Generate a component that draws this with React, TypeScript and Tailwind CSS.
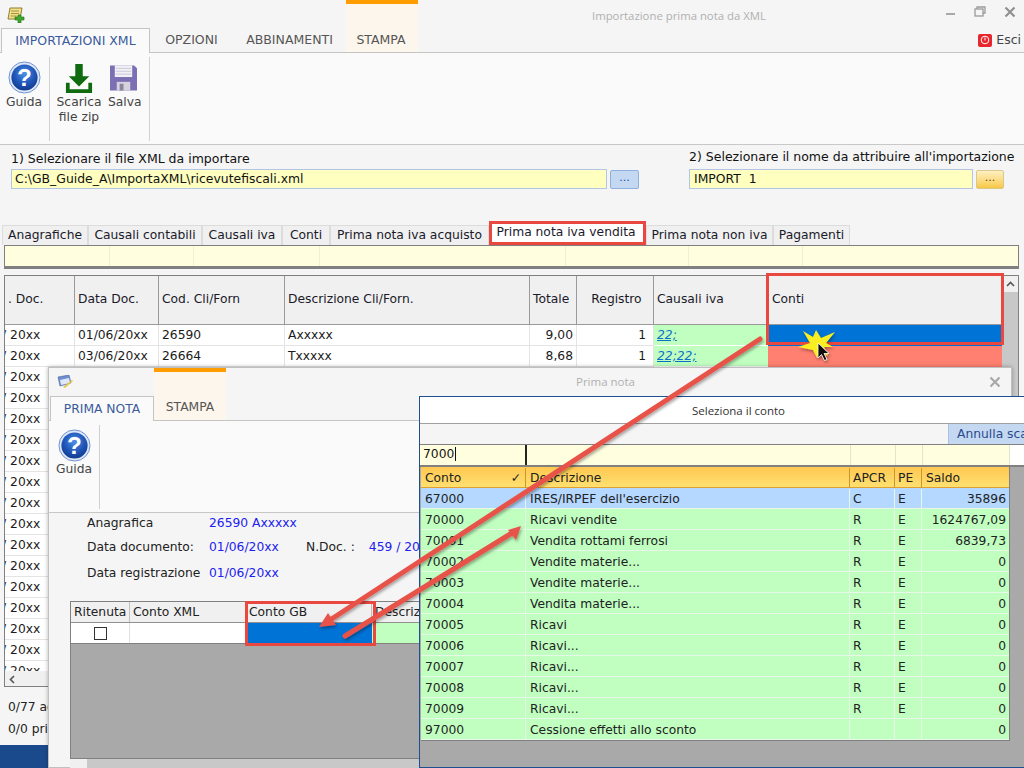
import React from "react";

const FONT = "font-['DejaVu_Sans',Verdana,sans-serif]";

function HelpIcon() {
  return (
    <svg width="33" height="33" viewBox="0 0 34 34">
      <defs>
        <radialGradient id="hg" cx="50%" cy="35%" r="65%">
          <stop offset="0%" stopColor="#4f8fe8" />
          <stop offset="60%" stopColor="#1f56b8" />
          <stop offset="100%" stopColor="#123c8e" />
        </radialGradient>
      </defs>
      <circle cx="17" cy="17" r="16" fill="#dfe8f8" stroke="#6d8fcf" strokeWidth="1" />
      <circle cx="17" cy="17" r="13.5" fill="url(#hg)" />
      <text x="17" y="26" textAnchor="middle" fontSize="25" fontWeight="700" fontFamily="Liberation Sans" fill="#fff">?</text>
    </svg>
  );
}

function DownloadIcon() {
  return (
    <svg width="28" height="30" viewBox="0 0 30 32">
      <path d="M11 0h8v13h7L15 24 4 13h7z" fill="#0f6a10" />
      <path d="M1 20h4v7h20v-7h4v11H1z" fill="#0f6a10" />
    </svg>
  );
}

function SaveIcon() {
  return (
    <svg width="27" height="27" viewBox="0 0 28 27">
      <path d="M0 1h25l3 3v23H0z" fill="#7d6fb4" />
      <rect x="5" y="1" width="18" height="12" fill="#f2f1f6" />
      <path d="M6 4h16M6 7h16M6 10h16" stroke="#c9c6d9" strokeWidth="1" />
      <rect x="7" y="18" width="14" height="9" fill="#d5d3dc" />
      <rect x="10" y="20" width="4" height="7" fill="#8a86a0" />
    </svg>
  );
}

function AppIcon() {
  return (
    <svg width="18" height="16" viewBox="0 0 18 16">
      <path d="M3 1h12l-2 11H1z" fill="#f2e08a" stroke="#8f7f2e" strokeWidth="1" />
      <path d="M4 4h8M4 6.500h8M3.500 9h6" stroke="#8f7f2e" strokeWidth=".8" />
      <path d="M11 8h3v2h3v3h-3v3h-3v-3H8v-3h3z" fill="#3ea82c" stroke="#1f6d14" strokeWidth=".6" />
    </svg>
  );
}

function NoteIcon() {
  return (
    <svg width="17" height="14" viewBox="0 0 17 14">
      <path d="M1 2l11-2 2 8-11 3z" fill="#6f8fd0" stroke="#48629e" strokeWidth=".6" />
      <path d="M3 5l9-2 1 5-9 2z" fill="#dfe7f8" />
      <path d="M6 12l9-7 1 1-8 7z" fill="#e5c84c" />
    </svg>
  );
}

const COLS = "grid grid-cols-[70px_84px_126px_245px_47px_77px_114px_235px]";
const HEAD = "bg-[#f0f0f0] border-r border-[#9a9a9a] text-[#1a1a2a] pl-[3px] pb-[2px] flex items-center h-[48px] text-[12.300px]";

function MainHeader() {
  return (
    <div className={`${COLS} h-[49px] border-b border-[#9a9a9a]`}>
      <div className={`${HEAD} pl-0 whitespace-nowrap overflow-hidden`}>. Doc.</div>
      <div className={HEAD}>Data Doc.</div>
      <div className={HEAD}>Cod. Cli/Forn</div>
      <div className={HEAD}>Descrizione Cli/Forn.</div>
      <div className={HEAD}>Totale</div>
      <div className={`${HEAD} justify-center`}>Registro</div>
      <div className={HEAD}>Causali iva</div>
      <div className={`${HEAD} pl-[4px]`}>Conti</div>
    </div>
  );
}

function MainRow({ d, c, n, t, iva, bg }: { d: string; c: string; n: string; t: string; iva: string; bg: string }) {
  const cell = "bg-white border-r border-b border-[#e4e4e4] h-[21px] flex items-center pl-[3px] text-[12.300px] text-[#1a1a1a] whitespace-nowrap overflow-hidden";
  return (
    <div className={`${COLS} h-[21px]`}>
      <div className={cell}><span className="-ml-[6px]">/ 20xx</span></div>
      <div className={cell}>{d}</div>
      <div className={cell}>{c}</div>
      <div className={cell}>{n}</div>
      <div className={`${cell} justify-end pr-[3px]`}>{t}</div>
      <div className={`${cell} justify-end pr-[7px]`}>1</div>
      <div className="bg-[#c0ffc0] border-b border-white h-[21px] flex items-center pl-[3px] text-[12.300px] text-[#0a6fc9] underline italic">{iva}</div>
      <div className={`${bg} h-[21px]`} />
    </div>
  );
}

const CONTI: [string, string, string, string, string][] = [
  ["67000", "IRES/IRPEF dell'esercizio", "C", "E", "35896"],
  ["70000", "Ricavi vendite", "R", "E", "1624767,09"],
  ["70001", "Vendita rottami ferrosi", "R", "E", "6839,73"],
  ["70002", "Vendite materie...", "R", "E", "0"],
  ["70003", "Vendite materie...", "R", "E", "0"],
  ["70004", "Vendita materie...", "R", "E", "0"],
  ["70005", "Ricavi", "R", "E", "0"],
  ["70006", "Ricavi...", "R", "E", "0"],
  ["70007", "Ricavi...", "R", "E", "0"],
  ["70008", "Ricavi...", "R", "E", "0"],
  ["70009", "Ricavi...", "R", "E", "0"],
  ["97000", "Cessione effetti allo sconto", "", "", "0"],
];

const SEL_COLS = "grid grid-cols-[105px_324px_45px_27px_87px]";

function Tabs2() {
  const tabs: [string, string][] = [
    ["Anagrafiche", "w-[86px]"],
    ["Causali contabili", "w-[114px]"],
    ["Causali iva", "w-[80px]"],
    ["Conti", "w-[48px]"],
    ["Prima nota iva acquisto", "w-[159px]"],
  ];
  const after: [string, string][] = [
    ["Prima nota non iva", "w-[127px]"],
    ["Pagamenti", "w-[77px]"],
  ];
  const c = "h-[20px] bg-[#f0f0f0] border border-b-0 border-[#dcdcdc] flex items-center justify-center text-[12.300px] text-[#1a1a2a] whitespace-nowrap";
  return (
    <div className="flex items-end h-[24px] pl-[2px]">
      {tabs.map(([t, w]) => (
        <div key={t} className={`${w} ${c}`}>{t}</div>
      ))}
      <div className="w-[157px] h-[24px] bg-white border-[3px] border-[#e8483f] flex items-center justify-center text-[12.300px] text-[#1a1a2a] whitespace-nowrap pr-[3px] pb-[2px]">
        Prima nota iva vendita
      </div>
      {after.map(([t, w]) => (
        <div key={t} className={`${w} ${c}`}>{t}</div>
      ))}
    </div>
  );
}

export default function App() {
  const rows = Array.from({ length: 14 });
  return (
    <div className={`relative w-[1024px] h-[768px] overflow-hidden bg-[#f5f5f5] ${FONT}`}>
      <div className="absolute left-[346px] top-0 w-[72px] h-[52px] bg-[#fdf6ec] border-t-[4px] border-[#ff9c00]" />
      {/* Main window */}
      <div className="relative flex items-start h-[28px]">
        <div className="pl-[7px] pt-[7px]"><AppIcon /></div>
        <div className="ml-[567px] pt-[7px] text-[11.350px] text-[#b0b0b0] font-['Open_Sans',sans-serif]">Importazione prima nota da XML</div>
        <div className="ml-auto flex items-center gap-[18px] pt-[6px] pr-[8px] text-[#9a9a9a]">
          <svg width="10" height="10" viewBox="0 0 10 10"><path d="M0 7h9" stroke="#a8a8a8" strokeWidth="2" /></svg>
          <svg width="12" height="12" viewBox="0 0 12 12" fill="none" stroke="#9a9a9a" strokeWidth="1.300"><path d="M3 3V1h8v6H9" /><rect x="1" y="3" width="8" height="7" /></svg>
          <svg width="12" height="12" viewBox="0 0 12 12"><path d="M1.500 1.500l9 9M10.500 1.500l-9 9" stroke="#909090" strokeWidth="2.200" /></svg>
        </div>
      </div>
      <div className="relative h-[25px] border-b border-[#c4c4c4] flex items-end pl-[1px]">
        <div className="w-[149px] h-[25px] -mb-px bg-[#fafafa] border border-b-0 border-[#c4c4c4] flex items-center justify-center text-[#3a5a9c] text-[12.500px]">IMPORTAZIONI XML</div>
        <div className="w-[83px] h-[24px] flex items-center justify-center text-[#555] text-[12.500px]">OPZIONI</div>
        <div className="w-[113px] h-[24px] flex items-center justify-center text-[#555] text-[12.500px]">ABBINAMENTI</div>
        <div className="w-[72px] h-[24px] flex items-center justify-center text-[#555] text-[12.500px] ml-[-1px]">STAMPA</div>
        <div className="ml-auto h-[24px] flex items-center gap-[4px] pr-[3px] text-[12.500px] text-[#444]">
          <span className="w-[14px] h-[13px] rounded-[2px] bg-[#e8262c] flex items-center justify-center">
            <svg width="10" height="10" viewBox="0 0 10 10" fill="none" stroke="#fff" strokeWidth="1"><circle cx="5" cy="5" r="3.800" /><path d="M5 2.500v3" /></svg>
          </span>
          Esci
        </div>
      </div>
      <div className="h-[92px] bg-[#fafafa] border-b border-[#c8c8c8] flex pt-[4px] text-[12.300px] text-[#444]">
        <div className="w-[50px] h-[84px] border-r border-[#d0d0d0] flex flex-col items-center pt-[4px] pr-[1px]">
          <HelpIcon />
          <span className="leading-[15px] mt-[1px]">Guida</span>
        </div>
        <div className="flex flex-col items-center w-[58px] text-center pt-[7px]">
          <DownloadIcon />
          <span className="leading-[15px] mt-[1px]">Scarica<br />file zip</span>
        </div>
        <div className="flex flex-col items-start w-[42px] h-[84px] border-r border-[#d0d0d0] pt-[7px]">
          <span className="block ml-[2px] h-[27px]"><SaveIcon /></span>
          <span className="leading-[15px] mt-[4px]">Salva</span>
        </div>
      </div>
      <div className="flex h-[76px] pt-[3px]">
        <div className="pl-[11px] w-[689px]">
          <div className="text-[12.500px] text-[#111] leading-[18px] mt-[2px]">1) Selezionare il file XML da importare</div>
          <div className="flex items-center mt-[1px]">
            <div className="w-[596px] h-[20px] bg-[#ffffc0] border border-[#b4c4e4] flex items-center pl-[3px] text-[12.400px] text-[#111]">C:\GB_Guide_A\ImportaXML\ricevutefiscali.xml</div>
            <div className="ml-[3px] w-[29px] h-[19px] rounded-[2px] bg-[#c4d8f2] border border-[#8cb0e0] flex items-center justify-center text-[11px] text-[#1a4fb0] leading-none pb-[3px]">...</div>
          </div>
        </div>
        <div>
          <div className="text-[12.500px] text-[#111] leading-[18px]">2) Selezionare il nome da attribuire all'importazione</div>
          <div className="flex items-center mt-[3px]">
            <div className="w-[284px] h-[20px] bg-[#ffffc0] border border-[#b4c4e4] flex items-center pl-[4px] text-[12.400px] text-[#111] whitespace-pre">IMPORT  1</div>
            <div className="ml-[3px] w-[28px] h-[19px] rounded-[2px] bg-linear-to-b from-[#fff0c0] to-[#f8c840] border border-[#d8c88c] flex items-center justify-center text-[11px] text-[#6a4a00] leading-none pb-[3px]">...</div>
          </div>
        </div>
      </div>
      <Tabs2 />
      <div className="ml-[4px] w-[1015px] h-[24px] bg-[#ffffdf] border border-[#808080] border-b-[3px] flex">
        <div className="w-[105px] border-r border-[#f0f0d4]" />
        <div className="w-[84px] border-r border-[#f0f0d4]" />
        <div className="w-[126px] border-r border-[#f0f0d4]" />
        <div className="w-[246px] border-r border-[#f0f0d4]" />
        <div className="w-[123px] border-r border-[#f0f0d4]" />
        <div className="w-[114px] border-r border-[#f0f0d4]" />
      </div>
      {/* Main grid */}
      <div className="ml-[4px] mt-[6px] w-[1015px] h-[412px] border border-[#808080] bg-white flex overflow-hidden">
        <div className="flex-1 min-w-0 flex flex-col">
          <MainHeader />
          <MainRow d="01/06/20xx" c="26590" n="Axxxxx" t="9,00" iva="22;" bg="bg-[#0073d6]" />
          <MainRow d="03/06/20xx" c="26664" n="Txxxxx" t="8,68" iva="22;22;" bg="bg-[#ff8070]" />
          {rows.map((_, i) => (
            <div key={i} className="h-[21px] shrink-0 border-b border-[#e4e4e4] overflow-hidden text-[12.300px] text-[#1a1a1a] leading-[20px]"><span className="-ml-[3px]">/ 20xx</span></div>
          ))}
          <div className="h-[10px] shrink-0 overflow-hidden text-[12.300px] text-[#1a1a1a] leading-[20px]"><span className="-ml-[3px]">/ 20xx</span></div>
          <div className="h-[16px] shrink-0 bg-[#f0f0f0] flex items-center pl-[4px]">
            <svg width="6" height="9" viewBox="0 0 6 9" fill="none" stroke="#555" strokeWidth="1.600"><path d="M5 1L1.500 4.500 5 8" /></svg>
          </div>
        </div>
        <div className="w-[16px] bg-[#c8c8c8] flex justify-center">
          <div className="w-[16px] h-[16px] bg-[#f0f0f0] flex items-center justify-center">
            <svg width="9" height="6" viewBox="0 0 9 6" fill="none" stroke="#555" strokeWidth="1.600"><path d="M1 5l3.500-3.500L8 5" /></svg>
          </div>
        </div>
      </div>
      <div className="pl-[8px] pt-[9px] text-[12.300px] text-[#222] leading-[22px]">
        <div>0/77 acquisti</div>
        <div>0/0 prima nota</div>
      </div>
      <div className="absolute left-0 top-[745px] w-[48px] h-[23px] bg-[#1a4a8c]" />

      {/* Prima nota window */}
      <div className="absolute left-[48px] top-[367px] w-[964px] h-[401px] bg-[#f5f5f5] border border-[#c0c0c0] shadow-[0_0_4px_rgba(0,0,0,0.3)]">
        <div className="absolute left-[105px] top-0 w-[72px] h-[52px] bg-[#fdf6ec] border-t-[4px] border-[#ff9c00]" />
        <div className="relative flex h-[28px] items-center">
          <div className="pl-[8px]"><NoteIcon /></div>
          <div className="ml-[502px] text-[11.500px] text-[#b0b0b0] font-['Open_Sans',sans-serif]">Prima nota</div>
          <svg className="ml-auto mr-[10px]" width="12" height="12" viewBox="0 0 12 12"><path d="M1.500 1.500l9 9M10.500 1.500l-9 9" stroke="#a8a8a8" strokeWidth="2.200" /></svg>
        </div>
        <div className="relative h-[25px] border-b border-[#c4c4c4] flex items-end pl-[1px]">
          <div className="w-[104px] h-[25px] -mb-px bg-[#fafafa] border border-b-0 border-[#c4c4c4] flex items-center justify-center text-[#3a5a9c] text-[12.300px]">PRIMA NOTA</div>
          <div className="w-[72px] h-[25px] flex items-center justify-center text-[#555] text-[12.300px]">STAMPA</div>
        </div>
        <div className="relative h-[92px] bg-[#fafafa] border-b border-[#c8c8c8] flex pt-[4px]">
          <div className="w-[51px] h-[84px] border-r border-[#d0d0d0] flex flex-col items-center text-[12.300px] text-[#444] pt-[4px]">
            <HelpIcon />
            <span className="leading-[15px]">Guida</span>
          </div>
        </div>
        <div className="pl-[38px] text-[12.300px] text-[#222]">
          <div className="flex mt-[2px] h-[17px] items-center">
            <span className="w-[122px]">Anagrafica</span><span className="text-[#2020f0]">26590 Axxxxx</span>
          </div>
          <div className="flex mt-[7px] h-[17px] items-center">
            <span className="w-[122px]">Data documento:</span><span className="text-[#2020f0] w-[97px]">01/06/20xx</span>
            <span>N.Doc. :</span><span className="text-[#2020f0] ml-[14px] whitespace-nowrap">459 / 20xx</span>
          </div>
          <div className="flex mt-[9px] h-[17px] items-center">
            <span className="w-[122px] whitespace-nowrap">Data registrazione</span><span className="text-[#2020f0]">01/06/20xx</span>
          </div>
        </div>
        <div className="ml-[21px] mt-[19px] w-[900px] h-[158px] border border-[#808080] bg-[#a9a9a9]">
          <div className="grid grid-cols-[59px_116px_126px_1fr] h-[21px] border-b border-[#909090] bg-[#f0f0f0] text-[12.300px] text-[#222]">
            <div className="border-r border-[#c0c0c0] pl-[3px] leading-[20px]">Ritenuta</div>
            <div className="border-r border-[#c0c0c0] pl-[3px] leading-[20px]">Conto XML</div>
            <div className="border-r border-[#c0c0c0] pl-[3px] leading-[20px]">Conto GB</div>
            <div className="pl-[3px] leading-[20px]">Descrizione</div>
          </div>
          <div className="grid grid-cols-[59px_116px_126px_1fr] h-[21px] border-b border-[#808080] bg-white">
            <div className="border-r border-[#e0e0e0] flex items-center justify-center"><span className="w-[13px] h-[13px] border border-[#333] bg-white" /></div>
            <div className="border-r border-[#e0e0e0]" />
            <div className="bg-[#0073d6]" />
            <div className="bg-[#c0ffc0]" />
          </div>
        </div>
        <div className="ml-[21px] w-[900px] h-[10px] bg-[#c8c8c8] flex">
          <div className="w-[17px] h-[10px] bg-[#f0f0f0]" />
        </div>
      </div>

      {/* Seleziona il conto window */}
      <div className="absolute left-[419px] top-[396px] w-[636px] h-[372px] bg-[#a9a9a9] border border-[#1f4f8f]">
        <div className="h-[27px] bg-white border-b border-[#a0a0a0] flex items-center justify-center text-[11.500px] text-[#333] font-['Open_Sans',sans-serif] pt-[1px] pl-[3px]">Seleziona il conto</div>
        <div className="h-[21px] bg-[#f5f5f5] flex border-b border-[#808080]">
          <div className="ml-[528px] w-[107px] bg-[#c4d8f2] border-l border-[#a8c0e4] pl-[8px] text-[12.300px] leading-[20px] text-[#2a4a8c] whitespace-nowrap overflow-hidden">Annulla scarico</div>
        </div>
        <div className="flex h-[22px] bg-[#ffffdf] border-b-[2px] border-[#808080] text-[12.300px]">
          <div className="w-[107px] h-[20px] border-r-[2px] border-[#222] pl-[3px] leading-[19px] text-[#111]"><span className="border-r border-[#111] pr-px">7000</span></div>
          <div className="w-[324px] border-r border-[#e4e4c8]" />
          <div className="w-[45px] border-r border-[#e4e4c8]" />
          <div className="w-[27px] border-r border-[#e4e4c8]" />
          <div className="w-[87px] border-r border-[#e4e4c8]" />
          <div className="flex-1 bg-white" />
        </div>
        <div className="ml-[1px] w-[589px] border-r border-b border-[#808080]">
          <div className={`${SEL_COLS} h-[21px] bg-linear-to-b from-[#ffc850] to-[#ffe070] border-b border-[#e0a030] text-[12.300px] text-[#222] leading-[20px] pt-px`}>
            <div className="border-r border-[#c89830] pl-[4px] pr-[4px] flex justify-between">Conto<span>✓</span></div>
            <div className="border-r border-[#c89830] pl-[4px]">Descrizione</div>
            <div className="border-r border-[#c89830] pl-[3px]">APCR</div>
            <div className="border-r border-[#c89830] pl-[3px]">PE</div>
            <div className="pl-[4px]">Saldo</div>
          </div>
          {CONTI.map((r, i) => {
            const bg = i === 0 ? "bg-[#b4d8ff]" : "bg-[#c0ffc0]";
            const cell = "border-r border-[#e8f8e8]";
            return (
              <div key={r[0]} className={`${SEL_COLS} h-[21px] ${bg} border-b border-[#e8f8e8] text-[12.300px] text-[#222] leading-[20px] pt-px`}>
                <div className={`${cell} pl-[4px]`}>{r[0]}</div>
                <div className={`${cell} pl-[4px] whitespace-nowrap`}>{r[1]}</div>
                <div className={`${cell} pl-[3px]`}>{r[2]}</div>
                <div className={`${cell} pl-[3px]`}>{r[3]}</div>
                <div className="text-right pr-[3px]">{r[4]}</div>
              </div>
            );
          })}
        </div>
      </div>

      {/* Callouts */}
      <div className="absolute left-[766px] top-[273px] w-[238px] h-[72px] border-[3px] border-[#e8483f]" />
      <div className="absolute left-[245px] top-[601px] w-[131px] h-[45px] border-[3px] border-[#e8483f]" />
      <svg className="absolute left-0 top-0 pointer-events-none" width="1024" height="768" viewBox="0 0 1024 768">
        <defs>
          <filter id="sh" x="-10%" y="-10%" width="120%" height="120%"><feDropShadow dx="1" dy="2" stdDeviation="1.500" floodColor="#000" floodOpacity="0.35" /></filter>
        </defs>
        <g filter="url(#sh)">
          <path d="M760 339L330 620" stroke="#e8524a" strokeWidth="5" strokeLinecap="round" />
          <path d="M319 627l9-14 8 12z" fill="#e8524a" />
          <path d="M345 636L512 533" stroke="#e8524a" strokeWidth="5" strokeLinecap="round" />
          <path d="M521 526l-13 4 8 10z" fill="#e8524a" />
        </g>
        <g filter="url(#sh)">
          <path d="M803 331L813 337L816 330L821 338L835 332L826 343L833 347L824 347L828 356L819 351L817 358L813 350L798 347L810 343Z" fill="#f8ee20" />
          <path d="M818 343v15l3.500-3.500 3 6 2.500-1-3-6h5z" fill="#111" stroke="#fff" strokeWidth=".8" />
        </g>
      </svg>
    </div>
  );
}
